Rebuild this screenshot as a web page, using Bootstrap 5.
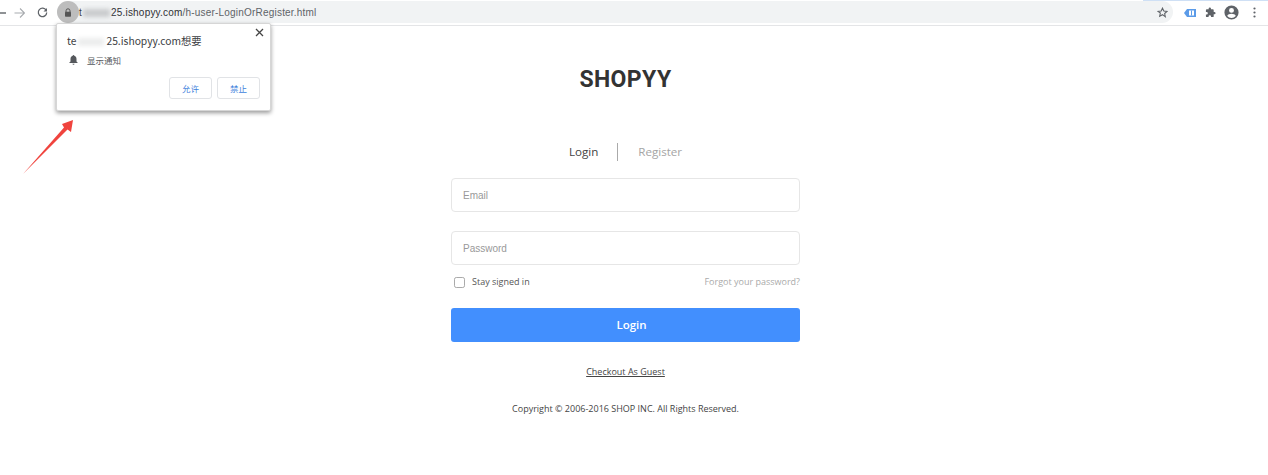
<!DOCTYPE html>
<html lang="en">
<head>
  <meta charset="UTF-8">
  <meta name="viewport" content="width=device-width, initial-scale=1">
  <title>Login - SHOPYY</title>
  <link href="https://cdn.jsdelivr.net/npm/bootstrap@5.3.0/dist/css/bootstrap.min.css" rel="stylesheet">
  <style>
    html, body { height: 475px; overflow: hidden; background: #fff; }
    body { font-family: "Open Sans", "Noto Sans CJK SC", sans-serif; color: #333; position: relative; }

    .browser-bar { height: 26px; border-bottom: 1px solid #e4e5e7; background: linear-gradient(#cfe0f5, #cfe0f5) right top / 125px 1px no-repeat; }
    .nav-ico { flex: none; display: block; }
    .back-ico { margin-left: 0; }
    .fwd-ico { margin-left: 6px; }
    .reload-ico { margin-left: 12px; }
    .url-box { height: 22px; margin-left: 9px; width: 1116px; flex: none; background: #f1f3f4; border-radius: 11px; font: 10px "Liberation Sans", sans-serif; letter-spacing: .2px; color: #5f6368; padding-right: 5px; margin-top: -1px; }
    .lock-pill { width: 22px; height: 22px; background: #bdbdbd; border-radius: 50%; flex: none; }
    .url-host { color: #303134; }
    .url-smudge { display: inline-block; width: 27px; height: 8px; background: #c9cbcd; filter: blur(2px); vertical-align: -1px; margin: 0 1px; }
    .ext-ico { flex: none; }
    .badge-ico { margin-left: 11px; }
    .puzzle-ico { margin-left: 9px; }
    .avatar-ico { margin-left: 7px; }
    .dots-ico { margin-left: 13px; }

    .perm-pop { position: absolute; left: 56px; top: 23px; width: 215px; height: 88px; background: #fff; border: 1px solid #d6d6d6; border-radius: 2px; box-shadow: 0 2px 4px rgba(0,0,0,.4); padding: 8px 10px 0 10px; font-family: "Noto Sans CJK SC", sans-serif; }
    .pop-title { font-size: 10.3px; line-height: 18px; color: #3c4043; }
    .pop-title .url-smudge { width: 26px; margin: 0 2px; background: #eceded; }
    .pop-close { position: absolute; right: 6px; top: 4px; }
    .pop-line { font-size: 8.5px; color: #55585c; margin-top: 3px; height: 14px; gap: 9px; padding-left: 2px; }
    .pop-btns { margin-top: 10px; gap: 5px; }
    .pop-btn { width: 43px; height: 22px; font-size: 8.5px; line-height: 20px; padding: 0; text-align: center; color: #3f7fdc; background: #fff; border: 1px solid #e1e3e6; border-radius: 3px; }

    .red-arrow { position: absolute; left: 20px; top: 116px; }

    .login-wrap { width: 349px; margin-left: 451px; }
    .brand-name { font-family: "Roboto", sans-serif; font-weight: 700; font-size: 23px; line-height: 28px; letter-spacing: .4px; color: #333; text-align: center; margin: 40px 0 0 0; }
    .tab-row { margin-top: 49px; height: 18px; font-size: 11.6px; line-height: 18px; }
    .tab-on { color: #444; padding-right: 19px; border-right: 1px solid #aaa; }
    .tab-off { color: #a5a5a5; padding-left: 20px; }
    .field-box { height: 34px; border: 1px solid #e6e6e6; border-radius: 4px; padding: 0 11px; font: 10px "Liberation Sans", sans-serif; color: #333; box-shadow: none; }
    .field-box::placeholder { color: #999; opacity: 1; }
    .mail-field { margin-top: 17px; }
    .pass-field { margin-top: 19px; }
    .opt-row { margin-top: 9px; height: 16px; font-size: 9px; line-height: 16px; padding-left: 3px; }
    .stay-check { width: 11px; height: 11px; margin: 0 7px 0 0; border: 1px solid #aaa; border-radius: 3px; float: none; }
    .stay-label { color: #555; }
    .forgot-link { color: #aaa; text-decoration: none; }
    .login-btn { margin-top: 18px; height: 34px; padding: 0 0 0 12px; background: #428ffe; border: 0; border-radius: 3px; font-size: 11.5px; font-weight: 600; color: #fff; }
    .guest-link { margin-top: 23px; font-size: 9px; line-height: 14px; text-align: center; }
    .guest-link a { color: #444; }
    .copy-line { margin-top: 23px; font-size: 9px; line-height: 14px; text-align: center; color: #444; }
  </style>
</head>
<body>
<div class="browser-bar d-flex align-items-center">
  <svg class="nav-ico back-ico" width="8" height="12" viewBox="0 0 8 12"><path d="M0 6h6" stroke="#5f6368" stroke-width="1.4" fill="none"/></svg>
  <svg class="nav-ico fwd-ico" width="11" height="12" viewBox="0 0 11 12"><path d="M.5 6h10M6 1.500 10.500 6 6 10.500" stroke="#a8abaf" stroke-width="1.1" fill="none"/></svg>
  <svg class="nav-ico reload-ico" width="11" height="11" viewBox="0 0 12 12"><path d="M10 3.600A4.600 4.600 0 1 0 10.600 6" stroke="#5f6368" stroke-width="1.400" fill="none"/><path d="M10.900 1v3.800H7.100z" fill="#5f6368"/></svg>
  <div class="url-box d-flex align-items-center">
    <div class="lock-pill d-flex align-items-center justify-content-center">
      <svg width="8" height="9" viewBox="0 0 8 9"><path d="M2 4V2.800a2 2 0 0 1 4 0V4" stroke="#555" fill="none"/><rect x="1" y="3.700" width="6" height="5" rx=".7" fill="#555"/></svg>
    </div>
    <span class="url-host">t<span class="url-smudge"></span>25.ishopyy.com</span><span>/h-user-LoginOrRegister.html</span>
    <svg class="ms-auto ext-ico" width="11" height="11" viewBox="0 0 24 24"><path d="M12 2.500l2.900 6.300 6.900.8-5.100 4.700 1.400 6.800L12 16.700 5.900 20.100l1.400-6.800L2.200 9.600l6.900-.8z" fill="none" stroke="#5f6368" stroke-width="2.400"/></svg>
  </div>
  <svg class="ext-ico badge-ico" width="12" height="10" viewBox="0 0 12 10"><path d="M0 5 3 1h9v8H3z" fill="#5b9be8"/><rect x="5" y="2.500" width="5" height="5" fill="#fff"/><path d="M7.500 2.500v5" stroke="#5b9be8"/></svg>
  <svg class="ext-ico puzzle-ico" width="11" height="11" viewBox="0 0 24 24"><path d="M20.500 11H19V7a2 2 0 0 0-2-2h-4V3.500a2.500 2.500 0 0 0-5 0V5H4a2 2 0 0 0-2 2v3.800h1.500a2.700 2.700 0 0 1 0 5.400H2V20a2 2 0 0 0 2 2h3.800v-1.500a2.700 2.700 0 0 1 5.400 0V22H17a2 2 0 0 0 2-2v-4h1.500a2.500 2.500 0 0 0 0-5z" fill="#5f6368"/></svg>
  <svg class="ext-ico avatar-ico" width="17" height="17" viewBox="0 0 24 24"><path d="M12 2a10 10 0 1 0 0 20 10 10 0 0 0 0-20zm0 3.500a3.500 3.500 0 1 1 0 7 3.500 3.500 0 0 1 0-7zm0 14.300a7.800 7.800 0 0 1-6-2.800c0-2 4-3.100 6-3.100s6 1.100 6 3.100a7.800 7.800 0 0 1-6 2.800z" fill="#5f6368"/></svg>
  <svg class="ext-ico dots-ico" width="3" height="11" viewBox="0 0 3 11"><circle cx="1.500" cy="1.500" r="1.100" fill="#5f6368"/><circle cx="1.500" cy="5.500" r="1.100" fill="#5f6368"/><circle cx="1.500" cy="9.500" r="1.100" fill="#5f6368"/></svg>
</div>

<div class="perm-pop">
  <div class="pop-title">te<span class="url-smudge"></span>25.ishopyy.com想要</div>
  <svg class="pop-close" width="9" height="9" viewBox="0 0 9 9"><path d="M1 1l7 7M8 1 1 8" stroke="#444" stroke-width="1.300"/></svg>
  <div class="pop-line d-flex align-items-center">
    <svg width="9" height="10" viewBox="0 0 9 10"><path d="M4.500 0c.5 0 .8.300.8.800C6.800 1.200 7.500 2.400 7.500 4v2.500L9 8H0l1.500-1.500V4c0-1.600.7-2.800 2.200-3.200 0-.5.300-.8.800-.8zM3.500 8.700h2a1 1 0 0 1-2 0z" fill="#55585c"/></svg>
    <span>显示通知</span>
  </div>
  <div class="pop-btns d-flex justify-content-end">
    <button class="pop-btn" type="button">允许</button>
    <button class="pop-btn" type="button">禁止</button>
  </div>
</div>

<svg class="red-arrow" width="56" height="60" viewBox="0 0 56 60"><path d="M3 58 44 11.500 42 8 53 4 51 16 47.500 13.500z" fill="#f0443e"/></svg>

<main class="login-wrap">
  <h1 class="brand-name">SHOPYY</h1>
  <div class="tab-row d-flex justify-content-center">
    <span class="tab-on">Login</span>
    <span class="tab-off">Register</span>
  </div>
  <form>
    <input type="text" class="form-control field-box mail-field" placeholder="Email">
    <input type="password" class="form-control field-box pass-field" placeholder="Password">
    <div class="opt-row d-flex align-items-center justify-content-between">
      <label class="d-flex align-items-center stay-label"><input type="checkbox" class="form-check-input stay-check">Stay signed in</label>
      <a href="#" class="forgot-link">Forgot your password?</a>
    </div>
    <button type="button" class="btn btn-primary w-100 d-block login-btn">Login</button>
  </form>
  <div class="guest-link"><a href="#">Checkout As Guest</a></div>
  <div class="copy-line">Copyright © 2006-2016 SHOP INC. All Rights Reserved.</div>
</main>

<script src="https://cdn.jsdelivr.net/npm/bootstrap@5.3.0/dist/js/bootstrap.bundle.min.js"></script>
</body>
</html>
